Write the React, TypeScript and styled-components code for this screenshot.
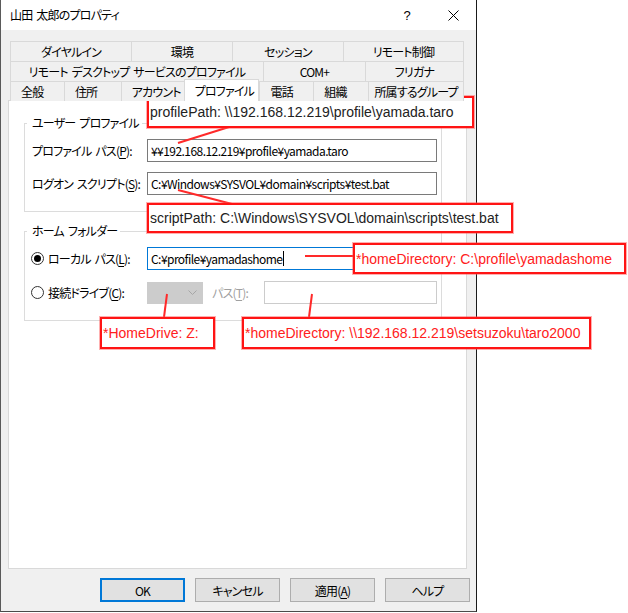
import React from "react";
import styled, { createGlobalStyle } from "styled-components";

const Global = createGlobalStyle`
  html, body { margin: 0; padding: 0; background: #ffffff; }
  body {
    font-family: "Noto Sans CJK JP", "Noto Sans", sans-serif;
    font-size: 12px;
  }
`;

const Stage = styled.div`
  position: relative;
  width: 628px;
  height: 613px;
  overflow: hidden;
  background: #ffffff;
`;

const Dialog = styled.div`
  width: 475px;
  height: 611px;
  border-left: 1px solid #5a5a5a;
  border-right: 1px solid #1a1a1a;
  border-bottom: 1px solid #4a4a4a;
  background: #f0f0f0;
  display: flex;
  flex-direction: column;
  color: #000;
  font-feature-settings: "palt" 1;
  letter-spacing: -0.8px;
  word-spacing: 2px;
`;

const TitleBar = styled.div`
  height: 30px;
  flex: none;
  background: #ffffff;
  display: flex;
  align-items: center;
  justify-content: space-between;
  padding-left: 9px;
`;

const TitleText = styled.span`
  font-size: 12px;
  line-height: 16px;
`;

const CaptionGroup = styled.div`
  display: flex;
  height: 100%;
`;

const CaptionButton = styled.div`
  width: 46px;
  height: 30px;
  display: flex;
  align-items: center;
  justify-content: center;
  font-family: "Liberation Sans", sans-serif;
  font-size: 13px;
  letter-spacing: 0;
`;

const Body = styled.div`
  flex: 1;
  display: flex;
  flex-direction: column;
  padding: 11px 0 0 7px;
`;

const TabStrip = styled.div`
  position: relative;
  z-index: 1;
  margin-left: 2px;
  width: 454px;
  height: 60px;
  display: flex;
  flex-direction: column;
`;

const TabRow = styled.div`
  display: flex;
  height: 20px;
`;

const Tab = styled.div<{ $w: number; $left?: boolean; $sel?: boolean; $last?: boolean }>`
  box-sizing: border-box;
  width: ${(p) => p.$w}px;
  height: ${(p) => (p.$sel ? 22 : 20)}px;
  margin-top: ${(p) => (p.$sel ? -2 : 0)}px;
  border-top: 1px solid #d9d9d9;
  border-left: 1px solid #d9d9d9;
  border-right: ${(p) => (p.$last || p.$sel ? "1px solid #d9d9d9" : "none")};
  background: ${(p) => (p.$sel ? "#ffffff" : "#f0f0f0")};
  display: flex;
  align-items: center;
  justify-content: ${(p) => (p.$left ? "flex-start" : "center")};
  padding-left: ${(p) => (p.$left ? 10 : 0)}px;
  white-space: nowrap;
  overflow: hidden;
  font-size: 12px;
  line-height: 16px;
  position: relative;
  z-index: ${(p) => (p.$sel ? 2 : 1)};
`;

const Panel = styled.div`
  position: relative;
  z-index: 0;
  box-sizing: border-box;
  width: 459px;
  height: 469px;
  margin-top: -1px;
  border: 1px solid #d9d9d9;
  background: #ffffff;
  padding: 14px 0 0 15px;
  display: flex;
  flex-direction: column;
  gap: 11px;
`;

const Group = styled.fieldset<{ $gap?: number }>`
  margin: 0;
  box-sizing: border-box;
  width: 418px;
  border: 1px solid #dcdcdc;
  padding: 8px 0 16px 7px;
  min-width: 0;
  display: flex;
  flex-direction: column;
  gap: ${(p) => p.$gap ?? 10}px;
`;

const Legend = styled.legend`
  font-size: 12px;
  line-height: 16px;
  padding: 0 3px 0 5px;
  margin-left: -5px;
`;

const FieldRow = styled.div`
  display: flex;
  align-items: center;
  height: 23px;
`;

const Label = styled.div<{ $w?: number; $muted?: boolean; $shift?: number }>`
  width: ${(p) => p.$w ?? 115}px;
  flex: none;
  margin-left: ${(p) => p.$shift ?? 0}px;
  white-space: nowrap;
  color: ${(p) => (p.$muted ? "#a0a0a0" : "#000")};
  display: flex;
  align-items: center;
`;

const Acc = styled.span`
  text-decoration: underline;
  text-underline-offset: 2px;
`;

const TextBox = styled.div<{ $w?: number; $focus?: boolean; $disabled?: boolean }>`
  box-sizing: border-box;
  width: ${(p) => p.$w ?? 290}px;
  height: 23px;
  flex: none;
  border: 1px solid
    ${(p) => (p.$focus ? "#0078d7" : p.$disabled ? "#cccccc" : "#7a7a7a")};
  background: #ffffff;
  padding-left: 3px;
  display: flex;
  align-items: center;
  white-space: nowrap;
  font-size: 12px;
  letter-spacing: -0.55px;
`;

const Caret = styled.span`
  display: inline-block;
  width: 1px;
  height: 15px;
  background: #000;
  margin-left: 1px;
`;

const Combo = styled.div`
  box-sizing: border-box;
  width: 56px;
  height: 22px;
  flex: none;
  border: 1px solid #cccccc;
  background: #cccccc;
  display: flex;
  align-items: center;
  justify-content: flex-end;
  padding-right: 5px;
  margin-right: 9px;
`;

const Radio = styled.span<{ $on?: boolean }>`
  box-sizing: border-box;
  width: 13px;
  height: 13px;
  border-radius: 50%;
  border: 1px solid #333333;
  background: #ffffff;
  display: inline-flex;
  align-items: center;
  justify-content: center;
  margin-right: 4px;
  flex: none;
  &::after {
    content: "";
    width: 7px;
    height: 7px;
    border-radius: 50%;
    background: ${(p) => (p.$on ? "#000" : "transparent")};
  }
`;

const ButtonRow = styled.div`
  display: flex;
  justify-content: flex-end;
  gap: 10px;
  margin-top: 9px;
  padding-right: 6px;
`;

const Button = styled.div<{ $default?: boolean }>`
  box-sizing: border-box;
  width: 85px;
  height: 24px;
  border: ${(p) => (p.$default ? "2px solid #0078d7" : "1px solid #adadad")};
  background: #e1e1e1;
  display: flex;
  align-items: center;
  justify-content: center;
  font-size: 12px;
`;

const Overlay = styled.svg`
  position: absolute;
  left: 0;
  top: 0;
  pointer-events: none;
`;

const Note = styled.div<{ $red?: boolean }>`
  position: absolute;
  box-sizing: border-box;
  border: 2px solid #ff1414;
  box-shadow: 0 0 0 1px rgba(255, 80, 80, 0.45);
  background: #ffffff;
  display: flex;
  align-items: center;
  padding-left: 1px;
  white-space: nowrap;
  font-family: "Liberation Sans", Arial, sans-serif;
  font-size: 14px;
  color: ${(p) => (p.$red ? "#ff2020" : "#222222")};
`;

type TabDef = { t: string; w: number; sel?: boolean; center?: boolean };

const rows: { tabs: TabDef[]; left?: boolean }[] = [
  {
    tabs: [
      { t: "ダイヤルイン", w: 121 },
      { t: "環境", w: 101 },
      { t: "セッション", w: 111 },
      { t: "リモート制御", w: 121 },
    ],
  },
  {
    tabs: [
      { t: "リモート デスクトップ サービスのプロファイル", w: 253 },
      { t: "COM+", w: 102 },
      { t: "フリガナ", w: 99 },
    ],
  },
  {
    left: true,
    tabs: [
      { t: "全般", w: 54 },
      { t: "住所", w: 57 },
      { t: "アカウント", w: 63 },
      { t: "プロファイル", w: 76, sel: true },
      { t: "電話", w: 54 },
      { t: "組織", w: 55 },
      { t: "所属するグループ", w: 96, center: true },
    ],
  },
];

const notes = [
  { x: 147, y: 96, w: 327, h: 32, red: false, text: "profilePath: \\\\192.168.12.219\\profile\\yamada.taro" },
  { x: 147, y: 203, w: 366, h: 30, red: false, text: "scriptPath: C:\\Windows\\SYSVOL\\domain\\scripts\\test.bat" },
  { x: 353, y: 243, w: 273, h: 31, red: true, text: "*homeDirectory: C:\\profile\\yamadashome" },
  { x: 100, y: 317, w: 115, h: 32, red: true, text: "*HomeDrive: Z:" },
  { x: 242, y: 317, w: 349, h: 32, red: true, text: "*homeDirectory: \\\\192.168.12.219\\setsuzoku\\taro2000" },
];

const lines = [
  [178, 143, 229, 127],
  [178, 190, 232, 204],
  [305, 256, 353, 256],
  [167, 294, 164, 317],
  [312, 294, 309, 317],
];

export default function App() {
  return (
    <Stage>
      <Global />
      <Dialog>
        <TitleBar>
          <TitleText>山田 太郎のプロパティ</TitleText>
          <CaptionGroup>
            <CaptionButton>?</CaptionButton>
            <CaptionButton>
              <svg width="11" height="11" viewBox="0 0 11 11">
                <path d="M0.5 0.5 L10.5 10.5 M10.5 0.5 L0.5 10.5" stroke="#000" strokeWidth="1" />
              </svg>
            </CaptionButton>
          </CaptionGroup>
        </TitleBar>
        <Body>
          <TabStrip>
            {rows.map((r, i) => (
              <TabRow key={i}>
                {r.tabs.map((tb, j) => (
                  <Tab
                    key={tb.t}
                    $w={tb.w}
                    $left={r.left && !tb.center}
                    $sel={tb.sel}
                    $last={j === r.tabs.length - 1}
                  >
                    {tb.t}
                  </Tab>
                ))}
              </TabRow>
            ))}
          </TabStrip>
          <Panel>
            <Group>
              <Legend>ユーザー プロファイル</Legend>
              <FieldRow>
                <Label>
                  プロファイル パス(<Acc>P</Acc>):
                </Label>
                <TextBox>¥¥192.168.12.219¥profile¥yamada.taro</TextBox>
              </FieldRow>
              <FieldRow>
                <Label>
                  ログオン スクリプト(<Acc>S</Acc>):
                </Label>
                <TextBox>C:¥Windows¥SYSVOL¥domain¥scripts¥test.bat</TextBox>
              </FieldRow>
            </Group>
            <Group $gap={11}>
              <Legend>ホーム フォルダー</Legend>
              <FieldRow>
                <Label $shift={-1} $w={116}>
                  <Radio $on />
                  ローカル パス(<Acc>L</Acc>):
                </Label>
                <TextBox $focus>
                  C:¥profile¥yamadashome
                  <Caret />
                </TextBox>
              </FieldRow>
              <FieldRow>
                <Label $shift={-1} $w={116}>
                  <Radio />
                  接続ドライブ(<Acc>C</Acc>):
                </Label>
                <Combo>
                  <svg width="9" height="5" viewBox="0 0 9 5">
                    <polyline points="0.5,0.5 4.5,4.5 8.5,0.5" fill="none" stroke="#a6a6a6" strokeWidth="1" />
                  </svg>
                </Combo>
                <Label $w={52} $muted>
                  パス(<Acc>T</Acc>):
                </Label>
                <TextBox $w={173} $disabled />
              </FieldRow>
            </Group>
          </Panel>
          <ButtonRow>
            <Button $default>OK</Button>
            <Button>キャンセル</Button>
            <Button>
              適用(<Acc>A</Acc>)
            </Button>
            <Button>ヘルプ</Button>
          </ButtonRow>
        </Body>
      </Dialog>
      <Overlay width="628" height="613" viewBox="0 0 628 613">
        {lines.map(([x1, y1, x2, y2], i) => (
          <line key={i} x1={x1} y1={y1} x2={x2} y2={y2} stroke="#ff2a2a" strokeWidth="2" />
        ))}
      </Overlay>
      {notes.map((n, i) => (
        <Note
          key={i}
          $red={n.red}
          style={{ left: n.x, top: n.y, width: n.w, height: n.h }}
        >
          {n.text}
        </Note>
      ))}
    </Stage>
  );
}
